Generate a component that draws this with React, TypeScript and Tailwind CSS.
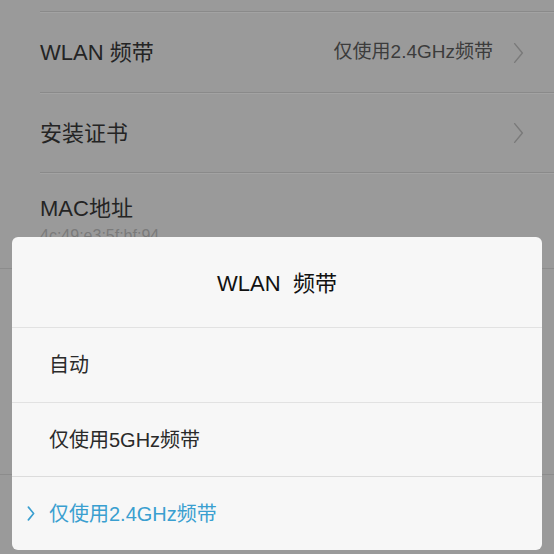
import React from "react";

const font = { fontFamily: '"Liberation Sans", "Noto Sans CJK SC", sans-serif' };

function Chevron({ className, sw = 1.3 }: { className: string; sw?: number }) {
  return (
    <svg viewBox="0 0 10 20" className={className} fill="none" stroke="currentColor" strokeWidth={sw} strokeLinecap="round" strokeLinejoin="round">
      <path d="M1.5 1.5 L8.5 10 L1.5 18.5" />
    </svg>
  );
}

export default function App() {
  return (
    <div className="relative w-[554px] h-[554px] overflow-hidden bg-[#9a9a9a]" style={font}>
      {/* background page */}
      <div className="flex flex-col pt-[11px]">
        <div className="ml-[40px] h-[2px] border-t border-[#8a8a8a] border-b border-b-[#a3a3a3]" />
        <div className="ml-[40px] h-[79px] flex items-center justify-between pr-[30px]">
          <span className="text-[22px] text-[#242424]">WLAN 频带</span>
          <div className="flex items-center gap-[20px]">
            <span className="text-[19px] text-[#3c3c3c]">仅使用2.4GHz频带</span>
            <Chevron className="w-[11px] h-[22px] text-[#7a7a7a]" />
          </div>
        </div>
        <div className="ml-[40px] h-[2px] border-t border-[#8a8a8a] border-b border-b-[#a3a3a3]" />
        <div className="ml-[40px] h-[78px] flex items-center justify-between pr-[30px]">
          <span className="text-[22px] text-[#242424]">安装证书</span>
          <Chevron className="w-[11px] h-[22px] text-[#7a7a7a]" />
        </div>
        <div className="ml-[40px] h-[2px] border-t border-[#8a8a8a] border-b border-b-[#a3a3a3]" />
        <div className="ml-[40px] h-[94px] flex flex-col pt-[22px]">
          <span className="text-[22px] leading-[26px] text-[#242424]">MAC地址</span>
          <span className="text-[16px] leading-[20px] mt-[4px] text-[#7a7a7a]">4c:49:e3:5f:bf:94</span>
        </div>
        <div className="h-[1px] bg-[#8c8c8c]" />
        <div className="h-[205px]" />
        <div className="h-[1px] bg-[#8c8c8c]" />
      </div>

      {/* dialog */}
      <div className="absolute left-[12px] top-[237px] w-[530px] h-[313px] rounded-[6px] bg-[#f7f7f7] flex flex-col overflow-hidden">
        <div className="h-[90px] flex items-center justify-center pt-[2px]">
          <span className="text-[22px] text-[#111111]">WLAN&nbsp;&nbsp;频带</span>
        </div>
        <div className="h-[1px] bg-[#e2e2e2]" />
        <div className="h-[74px] flex items-center pl-[37px]">
          <span className="text-[20px] text-[#2a2a2a]">自动</span>
        </div>
        <div className="h-[1px] bg-[#e2e2e2]" />
        <div className="h-[73px] flex items-center pl-[37px]">
          <span className="text-[20px] text-[#2a2a2a]">仅使用5GHz频带</span>
        </div>
        <div className="h-[1px] bg-[#dcdcdc]" />
        <div className="flex-1 flex items-center pl-[15px]">
          <Chevron className="w-[8px] h-[15px] text-[#3a9fd0] mr-[14px]" sw={2.2} />
          <span className="text-[20px] text-[#3a9fd0]">仅使用2.4GHz频带</span>
        </div>
      </div>
    </div>
  );
}
